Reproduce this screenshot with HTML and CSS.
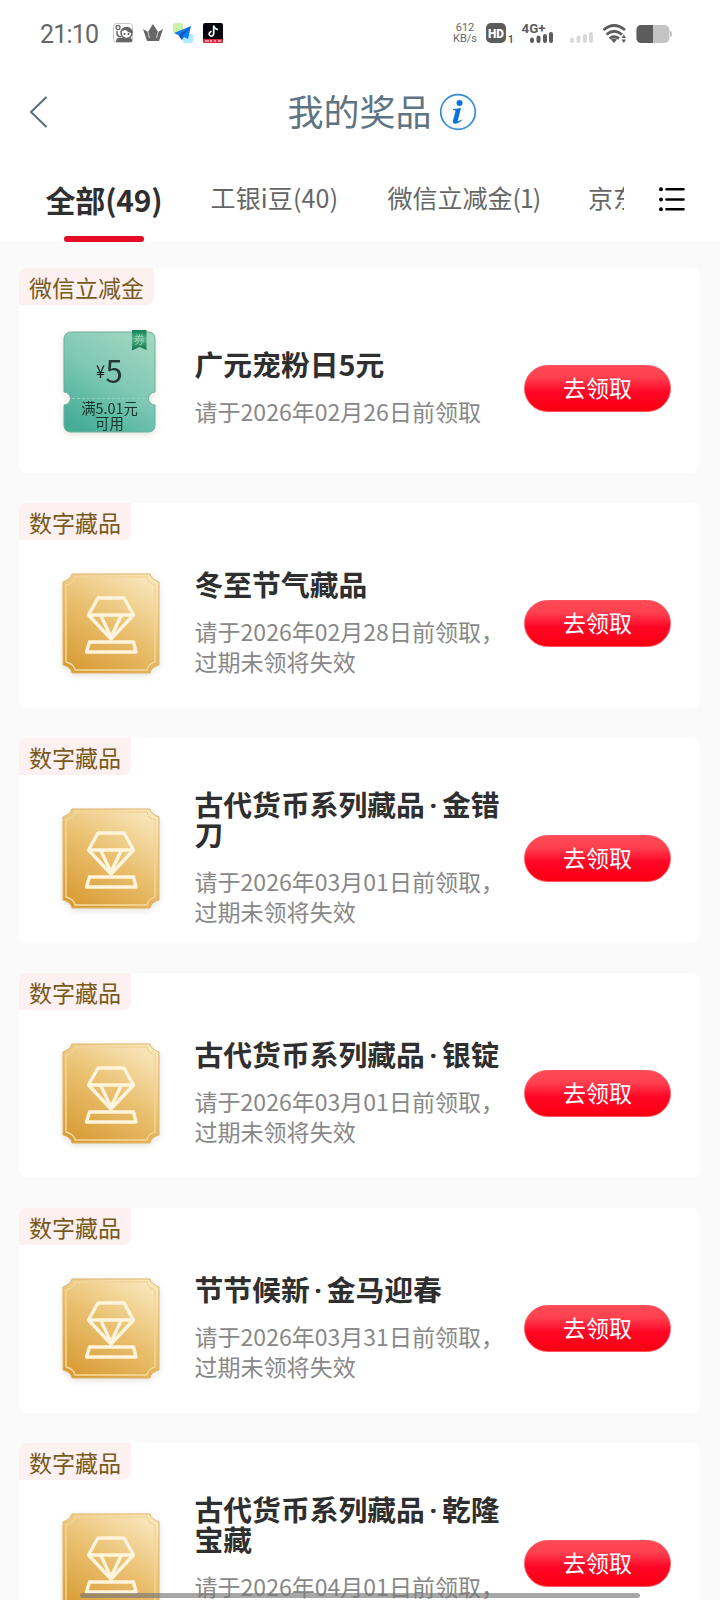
FILE: index.html
```html
<!DOCTYPE html>
<html lang="zh-CN">
<head>
<meta charset="utf-8">
<title>我的奖品</title>
<link rel="stylesheet" href="styles.css">
</head>
<body>
<svg class="defs" width="0" height="0" aria-hidden="true">
  <defs>
    <linearGradient id="gold" x1="0.8" y1="0" x2="0.2" y2="1">
      <stop offset="0" stop-color="#f9e6bb"/><stop offset="0.5" stop-color="#e9bf6e"/><stop offset="1" stop-color="#d99c36"/>
    </linearGradient>
    <linearGradient id="goldline" x1="0.8" y1="0" x2="0.2" y2="1">
      <stop offset="0" stop-color="#f1d398"/><stop offset="1" stop-color="#f8dda0"/>
    </linearGradient>
    <linearGradient id="green" x1="0.8" y1="0" x2="0.25" y2="1">
      <stop offset="0" stop-color="#a2d6c1"/><stop offset="0.5" stop-color="#7dc8b4"/><stop offset="1" stop-color="#46ad96"/>
    </linearGradient>
    <linearGradient id="ribbon" x1="0" y1="0" x2="0" y2="1">
      <stop offset="0" stop-color="#168055"/><stop offset="0.45" stop-color="#53b188"/><stop offset="1" stop-color="#0e7048"/>
    </linearGradient>
    <symbol id="gem" viewBox="0 0 98 102">
      <path d="M10 1H88Q89 6 97 9V92Q89 94 88 100H10Q9 94 1 92V9Q9 6 10 1Z" fill="url(#gold)" stroke="#dfb468" stroke-width="1"/>
      <path d="M13 4H85Q86 10 93 12V89Q86 91 85 97H13Q12 91 4 89V12Q12 10 13 4Z" fill="none" stroke="url(#goldline)" stroke-width="1.3"/>
      <g fill="none" stroke="#fff4dc" stroke-width="3.400" stroke-linejoin="round">
        <path d="M36 25H62L71.500 42L49 66L26.500 42Z"/>
        <path d="M26.500 42H71.500M39 43L49 64L59 43"/>
        <path d="M27.500 69H71.500L74 79H24.500Z"/>
      </g>
    </symbol>
  </defs>
</svg>

<div class="phone">
  <header class="status">
    <span class="clock">21:10</span>
    <svg class="apps" width="112" height="22" viewBox="112 22 112 22">
      <rect x="113.500" y="23.500" width="19" height="19" rx="3" fill="#fff" stroke="#c7c7c7"/>
      <circle cx="118" cy="27.500" r="2" fill="none" stroke="#666" stroke-width="1.300"/>
      <path d="M117 31V34Q117 36 121 37" fill="none" stroke="#666" stroke-width="1.500"/>
      <path d="M116 42Q116 37 121 38H131Q133 40 132 42Z" fill="#666"/>
      <circle cx="126.500" cy="33" r="5.500" fill="#fff" stroke="#666" stroke-width="1.500"/>
      <path d="M121 31Q123 26 128 27.500Q132 29 132 33Q128 33 126 30Z" fill="#666"/>
      <circle cx="124.500" cy="34" r="1" fill="#555"/><circle cx="128.500" cy="34" r="1" fill="#555"/>
      <path d="M143 29L148 32L153 24L158 32L163 29L159 41H147Z" fill="#666"/>
      <path d="M148 32L149.500 38M158 32L156.500 38" stroke="#fff" stroke-width="0.700"/>
      <rect x="173" y="23" width="10" height="10" rx="2" fill="#c9f3a8"/>
      <rect x="183" y="34" width="10" height="9" rx="2" fill="#abe9ff"/>
      <path d="M191 26L174 33L179 35.500L182 40L184 37L188 39Z" fill="#1479ef"/>
      <path d="M191 26L179 35.500L182 40L182.500 36Z" fill="#0758c8"/>
      <rect x="203" y="23" width="20" height="20" rx="2" fill="#05060d"/>
      <path d="M203 39H223V41Q223 43 221 43H205Q203 43 203 41Z" fill="#e3263c"/>
      <path d="M205 41H209M211 40V42M214 41H216M218 41H221" stroke="#fff" stroke-width="1.200"/>
      <path d="M213 26V34Q212.500 37 210 36.500Q207.500 35.500 209 33Q210 32 211 32" transform="translate(0.700 -0.500)" fill="none" stroke="#fff" stroke-width="1.700"/>
      <path d="M213.700 26Q215 29.500 218 29.500" fill="none" stroke="#dff" stroke-width="1.700"/>
    </svg>
    <span class="speed"><span>612</span><span>KB/s</span></span>
    <svg class="signals" width="190" height="24" viewBox="484 21 190 24">
      <rect x="486" y="23" width="20" height="20" rx="5" fill="#5c5c5c"/>
      <text class="hd" x="488" y="37.500" textLength="16" lengthAdjust="spacingAndGlyphs">HD</text>
      <text class="sim" x="508" y="43">1</text>
      <text class="net" x="521.500" y="33" textLength="24" lengthAdjust="spacingAndGlyphs">4G+</text>
      <g stroke="#5c5c5c" stroke-width="4" stroke-linecap="round">
        <path d="M532 39.500V41M538.500 37.500V41M545 36V41M551 34V41"/>
      </g>
      <g stroke="#d9d9d9" stroke-width="4" stroke-linecap="round">
        <path d="M572 39.500V41M578.500 37.500V41M585 36V41M591 34V41"/>
      </g>
      <g fill="none" stroke="#5c5c5c" stroke-width="2.800">
        <path d="M603.500 30Q614 21 625 30M606.500 34.500Q614 28 622 34.500M609.500 38.500Q614 35 619 38.500"/>
      </g>
      <path d="M611 39.500Q614 37.500 617 39.500L614 43Z" fill="#5c5c5c"/>
      <path d="M621.500 38L623.800 34.500L626 38ZM621.500 39.500H626L623.800 43Z" fill="#5c5c5c"/>
      <rect x="636.500" y="25" width="33" height="18" rx="5" fill="#c4c4c4"/>
      <path d="M653 25V43H641.500Q636.500 43 636.500 38V30Q636.500 25 641.500 25Z" fill="#5c5c5c"/>
      <path d="M670 31Q672 31 672 34Q672 37 670 37Z" fill="#c4c4c4"/>
    </svg>
  </header>

  <nav class="titlebar">
    <svg class="back" width="20" height="34" viewBox="0 0 20 34"><path d="M17.500 2L2 17L17.500 32" fill="none" stroke="#547080" stroke-width="2"/></svg>
    <h1 class="title">我的奖品</h1>
    <svg class="info" width="38" height="38" viewBox="0 0 38 38">
      <circle cx="19" cy="19" r="17.300" fill="#fcfeff" stroke="#338bdc" stroke-width="1.700"/>
      <circle cx="20.500" cy="10" r="3" fill="#0874de"/>
      <path d="M14 16Q18 16 22 14.800L18.700 28Q18.700 29 22.500 26.500L22.800 27.500Q19 31 16 30.800Q13.300 30.500 14 27.500L16.600 18Q16.500 17 14 17Z" fill="#0874de"/>
    </svg>
  </nav>

  <div class="tabs">
    <div class="tablist">
      <span class="tab active">全部(49)</span>
      <span class="tab t2">工银i豆(40)</span>
      <span class="tab t3">微信立减金<span class="count">(1)</span></span>
      <span class="tab">京东</span>
    </div>
    <svg class="menu" width="28" height="26" viewBox="0 0 28 26">
      <g stroke="#000" stroke-width="2.600" stroke-linecap="round"><path d="M8.500 3.300H25.500M8.500 13.500H25.500M8.500 23.300H25.500"/></g>
      <circle cx="3" cy="3.300" r="2"/><circle cx="3" cy="13.500" r="2"/><circle cx="3" cy="23.300" r="2"/>
    </svg>
  </div>

  <main class="list">
    <section class="card">
      <span class="tag">微信立减金</span>
      <div class="row">
        <svg class="art coupon" width="98" height="106" viewBox="0 0 98 106">
          <path d="M10 4H86Q93 4 93 11V64A6.500 6.500 0 0 0 93 77V97Q93 104 86 104H9Q2 104 2 97V77A6.500 6.500 0 0 0 2 64V11Q2 4 10 4Z" fill="url(#green)" stroke="#6aae9c"/>
          <path d="M10 70.500H86" stroke="#8fd0be" stroke-dasharray="3 2"/>
          <path d="M70 2H84.500V22L77.500 19L70 22.500Z" fill="url(#ribbon)"/>
          <text class="quan" x="72" y="16">券</text>
          <text class="yen" x="34" y="50" textLength="9" lengthAdjust="spacingAndGlyphs">¥</text>
          <text class="amount" x="43.500" y="55">5</text>
          <text class="cond" x="47.500" y="86">满5.01元</text>
          <text class="cond" x="47.500" y="101">可用</text>
        </svg>
        <div class="text"><h2 class="name">广元宠粉日5元</h2><p class="due">请于2026年02月26日前领取</p></div>
        <button class="claim">去领取</button>
      </div>
    </section>
    <section class="card">
      <span class="tag">数字藏品</span>
      <div class="row">
        <svg class="art" width="98" height="102"><use href="#gem"/></svg>
        <div class="text"><h2 class="name">冬至节气藏品</h2><p class="due">请于2026年02月28日前领取，<br>过期未领将失效</p></div>
        <button class="claim">去领取</button>
      </div>
    </section>
    <section class="card">
      <span class="tag">数字藏品</span>
      <div class="row">
        <svg class="art" width="98" height="102"><use href="#gem"/></svg>
        <div class="text"><h2 class="name">古代货币系列藏品<i class="dot">·</i>金错<br>刀</h2><p class="due">请于2026年03月01日前领取，<br>过期未领将失效</p></div>
        <button class="claim">去领取</button>
      </div>
    </section>
    <section class="card">
      <span class="tag">数字藏品</span>
      <div class="row">
        <svg class="art" width="98" height="102"><use href="#gem"/></svg>
        <div class="text"><h2 class="name">古代货币系列藏品<i class="dot">·</i>银锭</h2><p class="due">请于2026年03月01日前领取，<br>过期未领将失效</p></div>
        <button class="claim">去领取</button>
      </div>
    </section>
    <section class="card">
      <span class="tag">数字藏品</span>
      <div class="row">
        <svg class="art" width="98" height="102"><use href="#gem"/></svg>
        <div class="text"><h2 class="name">节节候新<i class="dot">·</i>金马迎春</h2><p class="due">请于2026年03月31日前领取，<br>过期未领将失效</p></div>
        <button class="claim">去领取</button>
      </div>
    </section>
    <section class="card">
      <span class="tag">数字藏品</span>
      <div class="row">
        <svg class="art" width="98" height="102"><use href="#gem"/></svg>
        <div class="text"><h2 class="name">古代货币系列藏品<i class="dot">·</i>乾隆<br>宝藏</h2><p class="due">请于2026年04月01日前领取，<br>过期未领将失效</p></div>
        <button class="claim">去领取</button>
      </div>
    </section>
  </main>
  <div class="homebar"></div>
</div>
</body>
</html>
```
FILE: styles.css
```css
* { box-sizing: border-box; }
body { margin: 0; background: #fafafa; font-family: "Noto Sans CJK SC", sans-serif; }
.defs { display: block; position: absolute; }
.phone { position: relative; width: 720px; height: 1600px; overflow: hidden; background: #fafafa; }

.status { display: flex; align-items: center; height: 66px; padding-left: 40px; background: #fff; }
.clock { width: 72px; font: 25px/30px Roboto, sans-serif; letter-spacing: -0.8px; color: #666; padding-top: 3px; }
.speed { display: flex; flex-direction: column; align-items: center; width: 26px; margin-left: 228px; font: 11px/11px Roboto, sans-serif; color: #666; white-space: nowrap; }
.signals { margin-left: 6px; }
.hd { font: 900 13px Roboto, sans-serif; fill: #fff; }
.sim { font: bold 10px Roboto, sans-serif; fill: #5c5c5c; }
.net { font: bold 13.500px Roboto, sans-serif; fill: #5c5c5c; }

.titlebar { display: flex; align-items: center; height: 92px; padding-left: 29px; background: #fff; }
.title { width: 151px; margin: 0 0 4px 238.500px; font-size: 36px; line-height: 40px; font-weight: 400; color: #5f7482; white-space: nowrap; }
.info { margin-left: 0.500px; }

.tabs { display: flex; height: 84px; padding-left: 46px; background: #fff; }
.tablist { display: flex; width: 578px; overflow: hidden; white-space: nowrap; }
.tab { flex: none; font-size: 25px; line-height: 32px; padding-top: 23px; color: #666; }
.active { display: flex; flex-direction: column; align-items: center; width: 116px; margin-right: 48.500px; font-size: 30px; font-weight: 700; letter-spacing: -0.2px; color: #2f2f2f; line-height: 36px; }
.active::after { content: ""; width: 80px; height: 6px; margin-top: 19px; border-radius: 3px; background: #e60c28; }
.t2 { width: 177px; letter-spacing: 0.150px; }
.t3 { width: 200.500px; }
.count { letter-spacing: -1px; }
.menu { margin: 28px 0 0 34px; }

.list { display: flex; flex-direction: column; gap: 29.500px; padding: 25.500px 20px 0 19px; }
.card { display: flex; flex-direction: column; flex: none; align-items: flex-start; height: 205.500px; border-radius: 8px; background: #fff; }
.tag { height: 37px; padding: 0 10px; border-radius: 8px 0 8px 0; background: #fdf0f0; font-size: 23px; line-height: 39px; color: #785a1c; }
.row { display: flex; flex: 1; align-items: center; width: 100%; padding-left: 42.500px; }
.art { display: block; flex: none; filter: drop-shadow(0 2px 3px rgba(80, 60, 20, 0.15)); }
.coupon { margin-bottom: 15px; }
.text { width: 328px; padding: 0 0 3px 35px; white-space: nowrap; }
.name { margin: 0 0 17.500px; font-size: 28.800px; line-height: 30px; font-weight: 700; color: #2f2f2f; }
.dot { display: inline-block; width: 17px; font-family: Roboto, sans-serif; font-style: normal; line-height: 24px; text-align: center; }
.due { margin: 0; font-size: 23.040px; line-height: 30px; font-weight: 400; color: #888; }
.claim { width: 147px; height: 47px; margin-left: 36.500px; padding: 0; border: 1px solid #f8555f; border-radius: 24px; background: linear-gradient(#ff4a55, #ff4150 25%, #ff0626 58%, #fa0011); font: 23px/36px "Noto Sans CJK SC", sans-serif; color: #fff; }
.claim { padding-bottom: 3px; }

.quan { font-size: 11px; fill: #9bd8bb; }
.yen { font-size: 18px; fill: #222; }
.amount { font-size: 31px; fill: #253733; }
.cond { font-size: 14.400px; fill: #17352c; text-anchor: middle; }
.homebar { position: absolute; left: 80px; top: 1593px; width: 560px; height: 5px; border-radius: 3px; background: rgba(120, 120, 120, 0.65); }
```
